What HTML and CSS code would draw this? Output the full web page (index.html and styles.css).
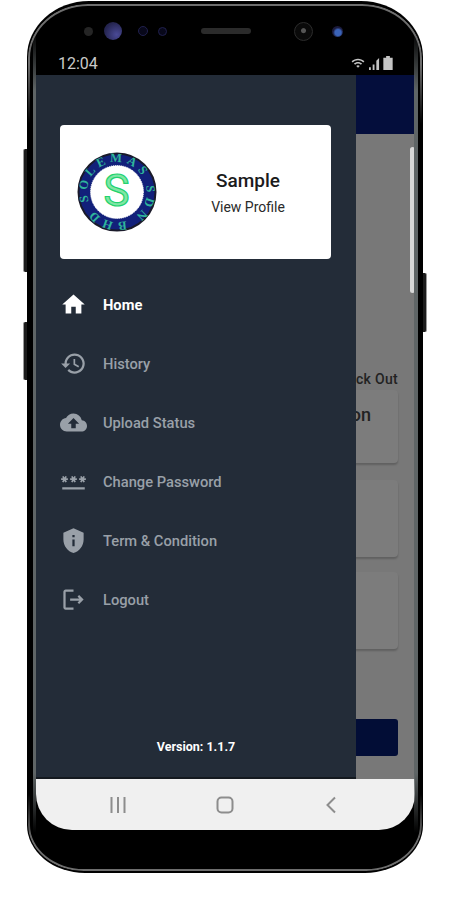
FILE: index.html
```html
<!DOCTYPE html>
<html lang="en">
<head>
    <meta charset="UTF-8">
    <meta name="viewport" content="width=device-width, initial-scale=1.0">
    <title>Solemas</title>
    <link rel="stylesheet" href="styles.css">
</head>
<body>

<div class="phone">
    <span class="side-btn side-btn-power"></span>
    <span class="side-btn side-btn-volume"></span>
    <span class="side-btn side-btn-right"></span>
    <span class="rim"></span>

    <!-- sensors and status bar -->
    <div class="bezel-top">
        <div class="sensors">
            <span class="sensor sensor-dot"></span>
            <span class="sensor sensor-lens"></span>
            <span class="sensor sensor-ring"></span>
            <span class="sensor sensor-ring-small"></span>
            <span class="speaker"></span>
            <span class="sensor sensor-camera"></span>
            <span class="sensor sensor-blue"></span>
        </div>
        <div class="status-bar">
            <span class="clock">12:04</span>
            <div class="status-icons">
                <svg class="status-wifi" viewBox="0 0 24 24"><path d="M1 9l2 2c5-5 13-5 18 0l2-2C17 3 7 3 1 9zm4 4l2 2c2.800-2.800 7.200-2.800 10 0l2-2c-3.900-3.900-10.100-3.900-14 0zm4 4l3 3 3-3c-1.700-1.700-4.300-1.700-6 0z"/></svg>
                <svg class="status-signal" viewBox="0 0 12 14"><path d="M0 14h2v-3H0zM4 14h2V8H4zM8 14h3V1L8 4z"/></svg>
                <svg class="status-battery" viewBox="0 0 10 15"><path d="M3 0h4v2h3v13H0V2h3z"/></svg>
            </div>
        </div>
    </div>

    <div class="screen">
        <div class="app">
            <div class="app-header"></div>
            <div class="app-main">
                <div class="check-label">Check Out</div>
                <div class="app-card app-card-first"><span class="app-card-title">Location</span></div>
                <div class="app-card"></div>
                <div class="app-card"></div>
                <div class="app-button"></div>
            </div>
            <span class="scroll-thumb"></span>

            <!-- drawer lies over the page -->
            <aside class="drawer">
                <div class="profile-card">
                    <svg class="logo" viewBox="0 0 80 80">
                        <defs>
                            <path id="ring-path" d="M12.750 51.290A29.500 29.500 0 1 1 67.250 28.710A29.500 29.500 0 1 1 12.750 51.290"/>
                        </defs>
                        <circle cx="40" cy="40" r="38.500" class="logo-ring"/>
                        <circle cx="40" cy="40" r="26.500" class="logo-inner"/>
                        <text class="logo-text"><textPath href="#ring-path" startOffset="2">SOLEMAS SDN BHD</textPath></text>
                        <text x="39.500" y="54" class="logo-s" text-anchor="middle">S</text>
                    </svg>
                    <div class="profile-info">
                        <div class="profile-name">Sample</div>
                        <div class="profile-link">View Profile</div>
                    </div>
                </div>

                <nav class="menu">
                    <div class="menu-item menu-item-active">
                        <svg class="menu-icon" viewBox="0 0 24 24"><path d="M10 20v-6h4v6h5v-8h3L12 3 2 12h3v8z"/></svg>
                        <span>Home</span>
                    </div>
                    <div class="menu-item">
                        <svg class="menu-icon" viewBox="0 0 24 24"><path d="M13 3c-4.970 0-9 4.030-9 9H1l3.890 3.890.070.140L9 12H6c0-3.870 3.130-7 7-7s7 3.130 7 7-3.130 7-7 7c-1.930 0-3.680-.790-4.940-2.060l-1.420 1.420C8.270 19.990 10.510 21 13 21c4.970 0 9-4.030 9-9s-4.030-9-9-9zm-1 5v5l4.280 2.540.720-1.210-3.500-2.080V8H12z"/></svg>
                        <span>History</span>
                    </div>
                    <div class="menu-item">
                        <svg class="menu-icon" viewBox="0 0 24 24"><path d="M19.350 10.040C18.670 6.590 15.640 4 12 4 9.110 4 6.600 5.640 5.350 8.040 2.340 8.360 0 10.910 0 14c0 3.310 2.690 6 6 6h13c2.760 0 5-2.240 5-5 0-2.640-2.050-4.780-4.650-4.960zM14 13v4h-4v-4H7l5-5 5 5h-3z"/></svg>
                        <span>Upload Status</span>
                    </div>
                    <div class="menu-item">
                        <svg class="menu-icon" viewBox="0 0 24 24"><path d="M2 17h20v2H2zm1.150-4.050L4 11.470l.850 1.480 1.300-.750-.850-1.480H7v-1.500H5.300l.850-1.470L4.850 7 4 8.470 3.150 7l-1.300.750.850 1.470H1v1.500h1.700l-.850 1.480 1.300.750zm6.700-.750 1.300.750.850-1.480.850 1.480 1.300-.750-.850-1.480H15v-1.500h-1.700l.850-1.470-1.300-.750L12 8.470 11.150 7l-1.300.750.850 1.470H9v1.500h1.700l-.850 1.480zM23 9.220h-1.700l.850-1.470-1.300-.750L20 8.470 19.150 7l-1.300.750.850 1.470H17v1.500h1.700l-.850 1.480 1.300.750.850-1.480.850 1.480 1.300-.750-.850-1.480H23v-1.500z"/></svg>
                        <span>Change Password</span>
                    </div>
                    <div class="menu-item">
                        <svg class="menu-icon" viewBox="0 0 24 24"><path d="M12 1L3 5v6c0 5.550 3.840 10.740 9 12 5.160-1.260 9-6.450 9-12V5l-9-4zm1 16h-2v-6h2v6zm0-8h-2V7h2v2z"/></svg>
                        <span>Term &amp; Condition</span>
                    </div>
                    <div class="menu-item">
                        <svg class="menu-icon" viewBox="0 0 24 24"><path d="M17 8l-1.410 1.410L17.170 11H9v2h8.170l-1.580 1.580L17 16l4-4-4-4zM5 5h7V3H5c-1.100 0-2 .9-2 2v14c0 1.100.9 2 2 2h7v-2H5V5z"/></svg>
                        <span>Logout</span>
                    </div>
                </nav>

                <div class="version">Version: 1.1.7</div>
            </aside>
        </div>

        <!-- android buttons -->
        <div class="nav-bar">
            <svg class="nav-icon" viewBox="0 0 18 18"><path d="M2.500 1v16M9 1v16M15.500 1v16"/></svg>
            <svg class="nav-icon" viewBox="0 0 18 18"><rect x="1.500" y="1.500" width="15" height="15" rx="4"/></svg>
            <svg class="nav-icon" viewBox="0 0 18 18"><path d="M13 1.500L5.500 9l7.500 7.500"/></svg>
        </div>
    </div>
</div>

</body>
</html>
```

FILE: styles.css
```css
body {
    margin: 0;
    background-color: #ffffff;
    font-family: Roboto, "Liberation Sans", sans-serif;
}

.phone {
    position: relative;
    box-sizing: border-box;
    width: 396px;
    height: 872px;
    margin: 1px 0 0 27px;
    padding: 0 8px;
    background-color: #000000;
    border-radius: 62px 62px 58px 58px / 56px 56px 48px 48px;
}
/* grey strip between the body and the screen */
.phone::before,
.phone::after {
    content: "";
    position: absolute;
    top: 30px;
    bottom: 40px;
    width: 3px;
    background: linear-gradient(180deg, transparent, #5f6566 60px, #5f6566 calc(100% - 60px), transparent);
}
.phone::before { left: 6px; }
.phone::after { right: 5px; width: 4px; }

.rim {
    position: absolute;
    top: 3px;
    right: 1px;
    bottom: 2px;
    left: 1px;
    border: 2px solid #6e6e6e;
    border-radius: 60px 60px 56px 56px / 54px 54px 46px 46px;
    -webkit-mask-image: linear-gradient(180deg, #000 0, #000 60px, transparent 120px, transparent 790px, #000 835px);
    mask-image: linear-gradient(180deg, #000 0, #000 60px, transparent 120px, transparent 790px, #000 835px);
}

.side-btn {
    position: absolute;
    box-sizing: border-box;
    width: 4px;
    background-color: #1c1c1c;
}
.side-btn-power { left: -4px; top: 148px; height: 123px; border-left: 1px solid #9a9a9a; border-radius: 2px 0 0 2px; }
.side-btn-volume { left: -4px; top: 321px; height: 58px; border-left: 1px solid #9a9a9a; border-radius: 2px 0 0 2px; }
.side-btn-right { right: -4px; top: 272px; height: 59px; border-right: 1px solid #9a9a9a; border-radius: 0 2px 2px 0; }

/* top part of the phone */
.bezel-top {
    position: relative;
    height: 74px;
    display: flex;
    flex-direction: column;
}
.sensors {
    display: flex;
    align-items: center;
    height: 20px;
    margin-top: 20px;
    padding-left: 49px;
}
.sensor {
    flex: none;
    border-radius: 50%;
}
.sensor-dot { width: 9px; height: 9px; background-color: #252525; }
.sensor-lens { width: 18px; height: 18px; margin-left: 11px; background: radial-gradient(circle at 70% 70%, #4a4a96, #24244f 70%); }
.sensor-ring { width: 10px; height: 10px; margin-left: 16px; border: 1px solid #20204d; background-color: #08081a; box-sizing: border-box; }
.sensor-ring-small { width: 9px; height: 9px; margin-left: 10px; border: 1px solid #20204d; background-color: #08081a; box-sizing: border-box; }
.speaker { width: 50px; height: 6px; margin-left: 34px; border-radius: 3px; background-color: #2b2b2b; }
.sensor-camera { width: 19px; height: 19px; margin-left: 43px; border: 1px solid #2c2c2c; background: radial-gradient(circle at 50% 45%, #555 0 2px, #0a0a0a 3px); box-sizing: border-box; }
.sensor-blue { width: 11px; height: 11px; margin-left: 19px; background: radial-gradient(circle at 55% 60%, #3a63b8 0 3px, #1a1a3c 5px); }

.status-bar {
    display: flex;
    align-items: center;
    justify-content: space-between;
    height: 22px;
    margin-top: 11px;
    padding: 0 22px 0 23px;
}
.clock {
    font-size: 16px;
    color: #c9c9c9;
}
.status-icons {
    display: flex;
    align-items: center;
    gap: 3px;
    fill: #c4c4c4;
}
.status-wifi { width: 16px; height: 14px; }
.status-signal { width: 11px; height: 13px; }
.status-battery { width: 10px; height: 14px; }

/* screen */
.screen {
    position: relative;
    width: 379px;
    height: 755px;
    margin-left: 1px;
    display: flex;
    flex-direction: column;
    overflow: hidden;
    border-radius: 0 0 36px 36px;
}
.app {
    position: relative;
    flex: 1;
    display: flex;
    flex-direction: column;
    background-color: #787878;
}
.app-header {
    height: 59px;
    background-color: #040e3c;
}
.app-main {
    flex: 1;
    display: flex;
    flex-direction: column;
    padding: 235px 17px 23px 20px;
}
.check-label {
    height: 21px;
    line-height: 20px;
    text-align: right;
    font-size: 14px;
    font-weight: 500;
    letter-spacing: 0.3px;
    color: #222222;
}
.app-card {
    height: 77px;
    margin-bottom: 15px;
    border-radius: 4px;
    background-color: #7c7c7c;
    box-shadow: 0 2px 2px rgba(0, 0, 0, 0.2);
}
.app-card-first {
    height: 73px;
    margin-bottom: 17px;
    padding-top: 14px;
    box-sizing: border-box;
    text-align: right;
}
.app-card-title {
    margin-right: 27px;
    font-size: 18px;
    font-weight: 500;
    color: #222222;
}
.app-button {
    height: 37px;
    margin-top: auto;
    border-radius: 3px;
    background-color: #020d36;
}
.scroll-thumb {
    position: absolute;
    right: 0;
    top: 72px;
    width: 5px;
    height: 146px;
    border-radius: 3px;
    background-color: #d8d8d8;
}

/* drawer */
.drawer {
    position: absolute;
    left: 0;
    top: 0;
    bottom: 0;
    width: 320px;
    display: flex;
    flex-direction: column;
    background-color: #232c38;
    border-bottom: 2px solid #14191f;
}
.profile-card {
    display: flex;
    align-items: center;
    height: 134px;
    margin: 50px 25px 0 24px;
    padding-left: 17px;
    box-sizing: border-box;
    border-radius: 4px;
    background-color: #ffffff;
}
.logo {
    flex: none;
    width: 80px;
    height: 80px;
}
.logo-ring {
    fill: #12207a;
    stroke: #1a1a2a;
    stroke-width: 2;
}
.logo-inner {
    fill: #ffffff;
    stroke: #ffffff;
    stroke-width: 1;
    stroke-dasharray: 1 1;
}
.logo-text {
    font-family: "Liberation Serif", serif;
    font-size: 12.500px;
    font-weight: 700;
    letter-spacing: 4px;
    fill: #2fb59a;
}
.logo-s {
    font-size: 44px;
    font-weight: 400;
    fill: #7fe6a4;
    stroke: #22d36f;
    stroke-width: 1.200px;
}
.profile-info {
    flex: 1;
    padding-left: 8px;
    text-align: center;
}
.profile-name {
    font-size: 19px;
    font-weight: 500;
    line-height: 22px;
    color: #1b1b1b;
}
.profile-link {
    margin-top: 7px;
    font-size: 14px;
    line-height: 16px;
    color: #2a2a2a;
}

.menu {
    margin-top: 16px;
}
.menu-item {
    display: flex;
    align-items: center;
    gap: 16px;
    height: 59px;
    padding-left: 24px;
    font-size: 14.700px;
    font-weight: 500;
    color: #99a0a8;
    fill: #99a0a8;
}
.menu-item-active {
    font-weight: 700;
    color: #ffffff;
    fill: #ffffff;
}
.menu-icon {
    flex: none;
    width: 27px;
    height: 27px;
}
.version {
    margin-top: auto;
    margin-bottom: 22px;
    text-align: center;
    font-size: 12.500px;
    font-weight: 700;
    line-height: 16px;
    color: #ffffff;
}

/* android nav */
.nav-bar {
    flex: none;
    display: flex;
    align-items: center;
    justify-content: space-between;
    height: 51px;
    padding: 0 75px 0 73px;
    box-sizing: border-box;
    background-color: #f0f0f0;
}
.nav-icon {
    width: 18px;
    height: 18px;
    fill: none;
    stroke: #8d8d8d;
    stroke-width: 2;
}
```
